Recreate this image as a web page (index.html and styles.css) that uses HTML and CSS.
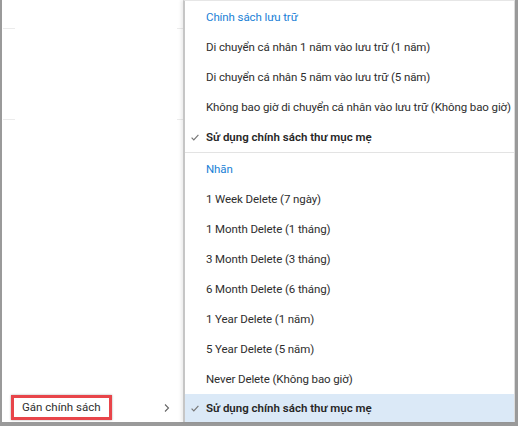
FILE: index.html
```html
<!DOCTYPE html>
<html lang="vi">
<head>
<meta charset="utf-8">
<title>Gán chính sách</title>
<link rel="stylesheet" href="styles.css">
</head>
<body>
<div class="frame">
  <div class="left">
    <div class="ghost-row"><span class="seg seg-l"></span><span class="seg seg-r"></span></div>
    <div class="ghost-row tall"><span class="seg seg-l"></span><span class="seg seg-r"></span></div>
    <div class="left-spacer"></div>
    <div class="left-item">
      <span class="assign">Gán chính sách</span>
      <svg class="chev" width="6" height="8" viewBox="0 0 6 8"><polyline points="1,0.5 4.5,4 1,7.5" fill="none" stroke="#666" stroke-width="1.1"/></svg>
    </div>
  </div>
  <div class="menu">
    <div class="row head">Chính sách lưu trữ</div>
    <div class="row">Di chuyển cá nhân 1 năm vào lưu trữ (1 năm)</div>
    <div class="row">Di chuyển cá nhân 5 năm vào lưu trữ (5 năm)</div>
    <div class="row">Không bao giờ di chuyển cá nhân vào lưu trữ (Không bao giờ)</div>
    <div class="row bold"><svg class="check" width="8" height="7" viewBox="0 0 8 7"><polyline points="0.6,3.6 2.8,5.8 7.4,0.8" fill="none" stroke="#777" stroke-width="1.2"/></svg>Sử dụng chính sách thư mục mẹ</div>
    <div class="sep"></div>
    <div class="row head">Nhãn</div>
    <div class="row">1 Week Delete (7 ngày)</div>
    <div class="row">1 Month Delete (1 tháng)</div>
    <div class="row">3 Month Delete (3 tháng)</div>
    <div class="row">6 Month Delete (6 tháng)</div>
    <div class="row">1 Year Delete (1 năm)</div>
    <div class="row">5 Year Delete (5 năm)</div>
    <div class="row">Never Delete (Không bao giờ)</div>
    <div class="row bold selected"><svg class="check" width="8" height="7" viewBox="0 0 8 7"><polyline points="0.6,3.6 2.8,5.8 7.4,0.8" fill="none" stroke="#777" stroke-width="1.2"/></svg>Sử dụng chính sách thư mục mẹ</div>
  </div>
</div>
</body>
</html>
```

FILE: styles.css
```css
html, body {
  margin: 0;
  padding: 0;
  background: #ffffff;
}
body {
  font-family: Roboto, "Noto Sans", sans-serif;
  font-size: 11.5px;
  color: #2e2e2e;
}
.frame {
  width: 518px;
  height: 426px;
  box-sizing: border-box;
  border-left: 2px solid #9a9a9a;
  border-right: 3px solid #9a9a9a;
  border-bottom: 4px solid #9a9a9a;
  display: grid;
  grid-template-columns: 181px 1fr;
  background: #ffffff;
}
.left {
  display: flex;
  flex-direction: column;
}
.ghost-row {
  height: 29px;
  display: flex;
  justify-content: space-between;
  align-items: flex-end;
}
.ghost-row.tall {
  height: 91px;
}
.seg {
  height: 1px;
  background: #ebebeb;
}
.seg-l { width: 12px; margin-left: 1px; }
.seg-r { width: 6px; }
.left-spacer {
  flex: 1;
}
.left-item {
  height: 28px;
  display: flex;
  align-items: center;
  justify-content: space-between;
  padding: 0 13px 0 9px;
}
.assign {
  border: 3px solid #e8454a;
  box-shadow: 0 0 2px rgba(0,0,0,0.35);
  padding: 1px 8px 2px 8px;
  line-height: 16px;
  margin-top: -1px;
}
.chev {
  display: block;
}
.menu {
  border-left: 2px solid #c6c6c6;
  border-right: 1px solid #dcdcdc;
  border-top: 1px solid #e6e6e6;
  box-shadow: -2px 0 3px rgba(0,0,0,0.08);
  display: flex;
  flex-direction: column;
  padding-top: 1px;
}
.row {
  height: 30px;
  display: flex;
  align-items: center;
  padding-left: 21px;
  position: relative;
  white-space: nowrap;
  letter-spacing: -0.1px;
}
.row.head {
  color: #1a7fd6;
}
.row.bold {
  font-weight: 600;
  color: #262626;
  letter-spacing: 0;
}
.row .check {
  position: absolute;
  left: 6px;
  top: 12px;
}
.sep {
  height: 1px;
  background: #e3e3e3;
  margin: 0 0 1px 0;
}
.row.selected {
  background: #dbe9f7;
  height: 28px;
}
.row.selected .check {
  top: 11px;
}
```
